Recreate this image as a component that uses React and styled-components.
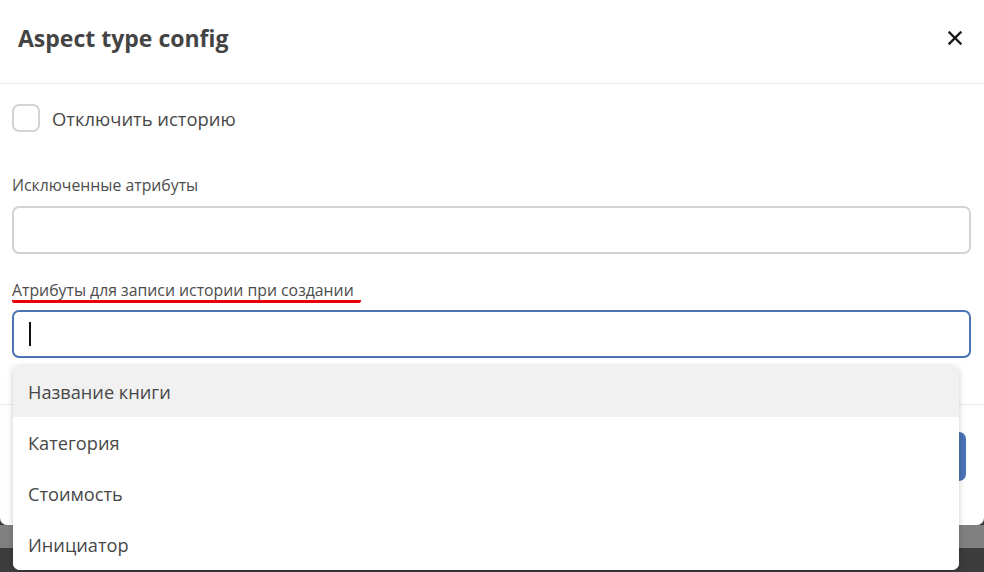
import React from 'react';
import styled, { createGlobalStyle } from 'styled-components';

const GlobalStyle = createGlobalStyle`
  * { box-sizing: border-box; }
  html, body { margin: 0; padding: 0; background: #3c3c3c; }
  body { font-family: 'Open Sans', 'Noto Sans', sans-serif; color: #474747; }
`;

const Page = styled.div`
  width: 984px;
  height: 572px;
  display: flex;
  flex-direction: column;
  overflow: hidden;
  position: relative;
  background: #3c3c3c;
`;

const Modal = styled.div`
  height: 525px;
  flex: none;
  background: #fff;
  border-radius: 0 0 7px 7px;
  display: flex;
  flex-direction: column;
  position: relative;
`;

const Backdrop = styled.div`
  height: 23px;
  flex: none;
  background: #808080;
`;

const Header = styled.div`
  height: 84px;
  flex: none;
  display: flex;
  align-items: center;
  justify-content: space-between;
  padding: 0 22px 7px 18px;
  border-bottom: 1px solid #e6e9ed;
`;

const Title = styled.h2`
  margin: 0;
  font-size: 23px;
  font-weight: 700;
  color: #444;
`;

const CloseButton = styled.button`
  border: 0;
  background: none;
  padding: 0;
  width: 14px;
  height: 14px;
  display: flex;
  cursor: pointer;
`;

const Body = styled.div`
  flex: 1;
  padding: 21px 13px 0 12px;
  position: relative;
`;

const CheckRow = styled.label`
  display: flex;
  align-items: center;
  gap: 12px;
  font-size: 18.4px;
  height: 26px;
  color: #474747;
`;

const CheckBox = styled.span`
  width: 28px;
  height: 28px;
  border: 2px solid #d4d4d4;
  border-radius: 7px;
  flex: none;
`;

const Field = styled.div`
  display: flex;
  flex-direction: column;
  align-items: flex-start;
  margin-top: ${p => p.$top}px;
`;

const Label = styled.span`
  font-size: 15.8px;
  line-height: 20px;
  color: #4d4d4d;
  padding-right: ${p => (p.$marked ? '7px' : '0')};
  border-bottom: ${p => (p.$marked ? '3px solid #e8000b' : '0')};
  border-radius: 2px;
  margin-bottom: ${p => (p.$marked ? '7px' : '11px')};
`;

const Input = styled.div`
  width: 100%;
  height: 48px;
  border: 2px solid ${p => (p.$focused ? '#4a74b4' : '#d2d2d2')};
  border-radius: 7px;
  display: flex;
  align-items: center;
  padding-left: 15px;
`;

const Caret = styled.span`
  width: 2px;
  height: 24px;
  background: #111;
`;

const Footer = styled.div`
  height: 121px;
  flex: none;
  border-top: 1px solid #e6e9ed;
  display: flex;
  align-items: flex-start;
  justify-content: flex-end;
  padding: 27px 18px 0 0;
`;

const PrimaryButton = styled.button`
  height: 49px;
  padding: 0 26px;
  border: 0;
  border-radius: 7px;
  background: #4a72b5;
  color: #fff;
  font-family: inherit;
  font-size: 16px;
`;

const Menu = styled.ul`
  position: absolute;
  top: 366px;
  left: 13px;
  width: 946px;
  margin: 0;
  padding: 0;
  list-style: none;
  background: #fff;
  border-radius: 7px;
  box-shadow: 0 1px 6px rgba(0, 0, 0, 0.22);
  overflow: hidden;
  z-index: 5;
`;

const MenuItem = styled.li`
  height: 51px;
  display: flex;
  align-items: center;
  padding-left: 15px;
  font-size: 18.2px;
  color: #474747;
  background: ${p => (p.$active ? '#f1f1f1' : '#fff')};
`;

const options = ['Название книги', 'Категория', 'Стоимость', 'Инициатор'];

export default function App() {
  return (
    <>
      <GlobalStyle />
      <Page>
        <Modal>
          <Header>
            <Title>Aspect type config</Title>
            <CloseButton aria-label="close">
              <svg width="14" height="14" viewBox="0 0 14 14">
                <path d="M1.5 1.5 L12.5 12.5 M12.5 1.5 L1.5 12.5" stroke="#1a1a1a" strokeWidth="2.4" strokeLinecap="square" />
              </svg>
            </CloseButton>
          </Header>
          <Body>
            <CheckRow>
              <CheckBox />
              Отключить историю
            </CheckRow>
            <Field $top={44}>
              <Label>Исключенные атрибуты</Label>
              <Input />
            </Field>
            <Field $top={26}>
              <Label $marked>Атрибуты для записи истории при создании</Label>
              <Input $focused>
                <Caret />
              </Input>
            </Field>
          </Body>
          <Footer>
            <PrimaryButton>Сохранить</PrimaryButton>
          </Footer>
          <Menu>
            {options.map((o, i) => (
              <MenuItem key={o} $active={i === 0}>{o}</MenuItem>
            ))}
          </Menu>
        </Modal>
        <Backdrop />
      </Page>
    </>
  );
}
